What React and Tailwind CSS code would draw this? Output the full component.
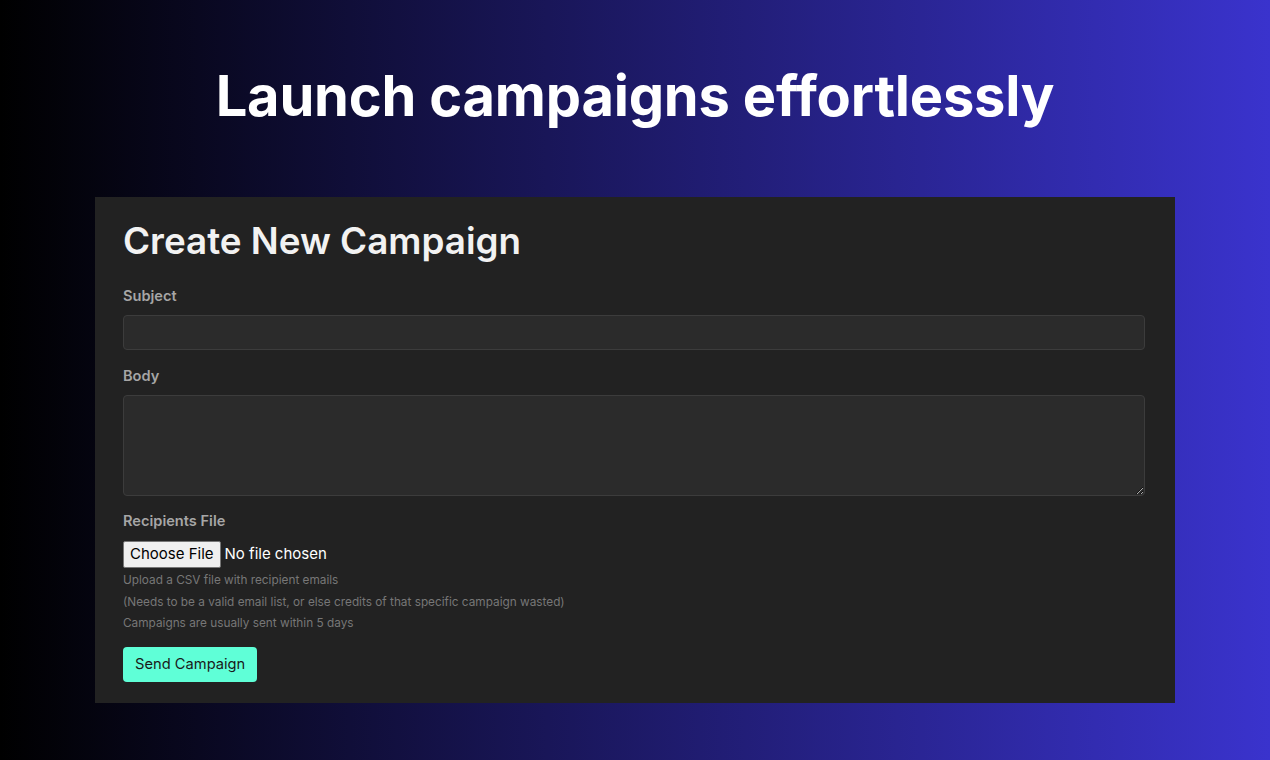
import React from 'react';

const App = () => {
  return (
    <div
      className="min-h-[760px] w-full bg-[linear-gradient(to_right,#000000,#3a33cd)] flex flex-col items-center"
      style={{ fontFamily: 'Inter, "Noto Sans", sans-serif' }}
    >
      <h1 className="mt-[60px] text-[56px] leading-[72px] font-bold text-white tracking-[-0.2px]">
        Launch campaigns effortlessly
      </h1>

      <div className="mt-[65px] w-[1080px] bg-[#222222] pl-7 pr-[30px] pt-[20px] pb-[21px]">
        <h2 className="text-[36.8px] leading-[48px] font-semibold text-[#f2f2f2]">Create New Campaign</h2>

        <form className="mt-[21px] flex flex-col" onSubmit={(e) => e.preventDefault()}>
          <label className="text-[14.6px] font-semibold text-[#a6a6a6] leading-[20px]">Subject</label>
          <input
            type="text"
            className="mt-[9px] h-[35px] w-full rounded bg-[#2b2b2b] border border-[#3c3c3c] px-3 text-sm text-white outline-none"
          />

          <label className="mt-[16px] text-[14.6px] font-semibold text-[#a6a6a6] leading-[20px]">Body</label>
          <textarea
            className="mt-[9px] h-[101px] w-full rounded bg-[#2b2b2b] border border-[#3c3c3c] px-3 py-2 text-sm text-white outline-none"
          />

          <label className="mt-[15px] text-[14.6px] font-semibold text-[#a6a6a6] leading-[20px]">Recipients File</label>
          <div className="mt-[10px] flex items-center">
            <span className="h-[27px] px-[6px] flex items-center bg-[#efefef] border border-[#767676] rounded-[2px] text-[15px] text-black">
              Choose File
            </span>
            <span className="ml-[4px] text-[15px] text-white">No file chosen</span>
          </div>
          <div className="mt-[2px] flex flex-col text-[11.8px] text-[#777777] leading-[21.5px]">
            <span>Upload a CSV file with recipient emails</span>
            <span>(Needs to be a valid email list, or else credits of that specific campaign wasted)</span>
            <span>Campaigns are usually sent within 5 days</span>
          </div>

          <div className="mt-[12px]">
            <button
              type="submit"
              className="h-[35px] px-3 rounded bg-[#5fffd7] text-[14.7px] text-[#1a1a1a]"
            >
              Send Campaign
            </button>
          </div>
        </form>
      </div>
    </div>
  );
};

export default App;
